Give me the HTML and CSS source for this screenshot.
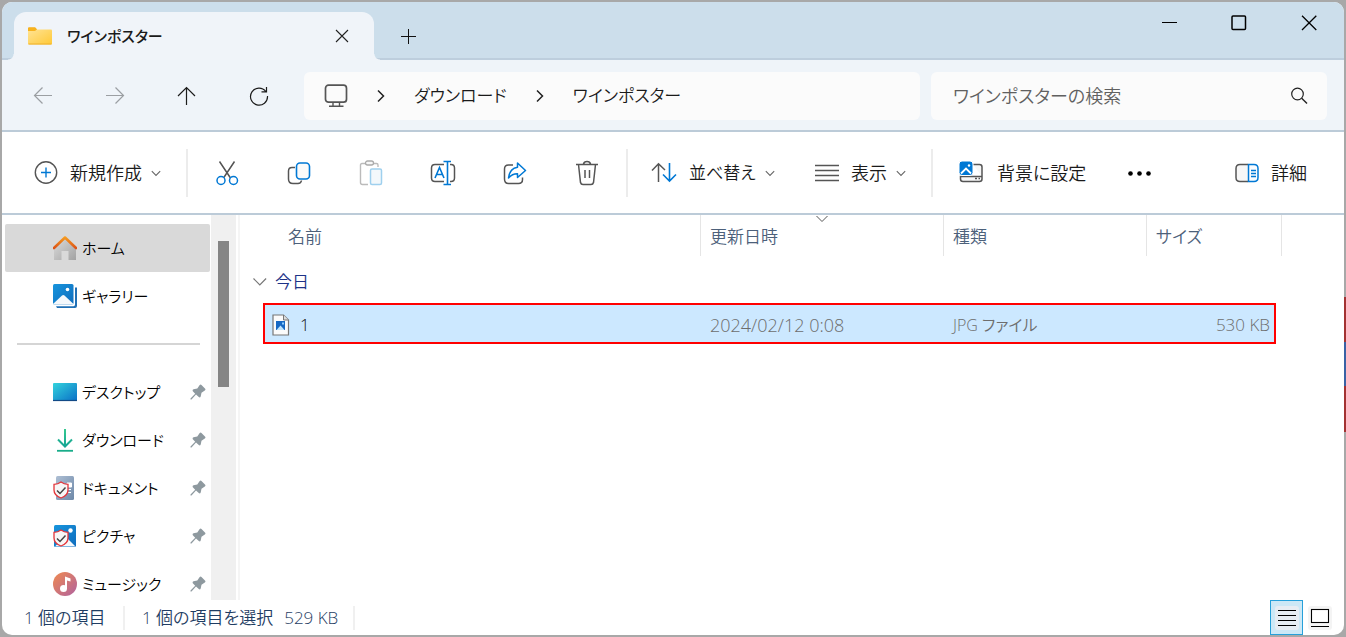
FILE: index.html
```html
<!DOCTYPE html>
<html lang="ja">
<head>
<meta charset="utf-8">
<title>ワインポスター</title>
<link rel="stylesheet" href="styles.css">
</head>
<body>
<svg class="defs" width="0" height="0" aria-hidden="true">
  <defs>
    <linearGradient id="gFolder" x1="0" y1="0" x2="1" y2="1"><stop offset="0" stop-color="#ffe394"/><stop offset="1" stop-color="#ffc937"/></linearGradient>
    <linearGradient id="gRoof" x1="0" y1="0" x2="0" y2="1"><stop offset="0" stop-color="#f59a1f"/><stop offset="1" stop-color="#dc5418"/></linearGradient>
    <linearGradient id="gWall" x1="0" y1="0" x2="1" y2="1"><stop offset="0" stop-color="#dcdcdc"/><stop offset="1" stop-color="#a2a2a2"/></linearGradient>
    <linearGradient id="gBlue" x1="0" y1="0" x2="1" y2="1"><stop offset="0" stop-color="#1795dd"/><stop offset="1" stop-color="#0f6cbd"/></linearGradient>
    <linearGradient id="gDesk" x1="0" y1="0" x2="1" y2="1"><stop offset="0" stop-color="#33d3dd"/><stop offset="1" stop-color="#0a6fc6"/></linearGradient>
    <linearGradient id="gDown" x1="0" y1="0" x2="0" y2="1"><stop offset="0" stop-color="#36c98f"/><stop offset="1" stop-color="#14a594"/></linearGradient>
    <linearGradient id="gDoc" x1="0" y1="0" x2="1" y2="1"><stop offset="0" stop-color="#aebfd4"/><stop offset="1" stop-color="#6d88a8"/></linearGradient>
    <linearGradient id="gMusic" x1="0" y1="0" x2="1" y2="1"><stop offset="0" stop-color="#f08a50"/><stop offset="1" stop-color="#b0629f"/></linearGradient>
    <symbol id="chev" viewBox="0 0 10 10"><path d="M1.500 3.500l3.500 3.500 3.500-3.500" fill="none" stroke="#666" stroke-width=".9"/></symbol>
    <symbol id="crumb" viewBox="0 0 10 14"><path d="M2 1.500l5.500 5.500L2 12.500" fill="none" stroke="#222" stroke-width="1.500"/></symbol>
    <symbol id="pin" viewBox="0 0 16 16"><path d="M9.500 1.200Q10.500 0 11.500 1L15.200 4.700Q16 5.700 14.800 6.500L11.500 8.800 10.700 12.500Q10 14.200 8.800 13L6 10.400 1.500 15.500H.5V14.500L5.200 9.700 2.800 7.200Q2 6 3.500 5.300L7.300 4.600Z" fill="#8e999f"/></symbol>
    <symbol id="shield" viewBox="0 0 16 18"><path d="M8 1Q11 3.300 15 3.300V9Q15 14.500 8 17 1 14.500 1 9V3.300Q5 3.300 8 1Z" fill="#f7f7f7" stroke="#e3343a" stroke-width="1.300"/><path d="M4 9.500l3 3 5.500-6" fill="none" stroke="#444" stroke-width="1.500"/></symbol>
  </defs>
</svg>
<div class="window">
  <header class="titlebar">
    <div class="tab">
      <svg width="24" height="18" viewBox="0 0 24 18"><path d="M0 1.500Q0 .5 1 .5H7L9 3H0Z" fill="#f2a514"/><path d="M0 2.500H23Q24 2.500 24 3.500V16.500Q24 17.500 23 17.500H1Q0 17.500 0 16.500Z" fill="url(#gFolder)"/><path d="M0 1.500Q0 .5 1 .5H7Q8.500 .5 8.500 2.200 8 4 6.500 4H0Z" fill="#f7b21d"/><path d="M.5 17H23.500" stroke="#eeb02d"/></svg>
      <span class="tab-title">ワインポスター</span>
      <button class="tab-close" aria-label="タブを閉じる"><svg width="14" height="14" viewBox="0 0 14 14"><path d="M1 1l12 12M13 1L1 13" stroke="#222" stroke-width="1.100"/></svg></button>
    </div>
    <button class="new-tab" aria-label="新しいタブ"><svg width="16" height="16" viewBox="0 0 16 16"><path d="M1 8.500H16M8.500 1V16" stroke="#111"/></svg></button>
    <div class="caption">
      <button aria-label="最小化"><svg width="16" height="16" viewBox="0 0 16 16"><path d="M1 7.500H16" stroke="#000"/></svg></button>
      <button aria-label="最大化"><svg width="16" height="16" viewBox="0 0 16 16"><rect x="1" y="1" width="13.500" height="13.500" rx="1" fill="none" stroke="#000" stroke-width="1.500"/></svg></button>
      <button aria-label="閉じる"><svg width="16" height="16" viewBox="0 0 16 16"><path d="M1 .7l14.300 14.300M15.300 .7L1 15" stroke="#000" stroke-width="1.300"/></svg></button>
    </div>
  </header>

  <div class="navbar">
    <div class="nav-buttons">
      <button aria-label="戻る" disabled><svg width="20" height="20" viewBox="0 0 20 20"><path d="M1 9.500H19M9.500 1.500L1.500 9.500l8 8" fill="none" stroke="#9b9fa3" stroke-width="1.200"/></svg></button>
      <button aria-label="進む" disabled><svg width="20" height="20" viewBox="0 0 20 20"><path d="M1 9.500H19M10.500 1.500l8 8-8 8" fill="none" stroke="#9b9fa3" stroke-width="1.200"/></svg></button>
      <button aria-label="上へ"><svg width="20" height="20" viewBox="0 0 20 20"><path d="M9.500 1.500V19M1 10l8.500-8.500L18 10" fill="none" stroke="#1c1c1c" stroke-width="1.200"/></svg></button>
      <button aria-label="最新の情報に更新"><svg width="20" height="20" viewBox="0 0 20 20"><path d="M16.800 5.500A8.500 8.500 0 1 0 18.500 10M17.500 1V5.800H12.500" fill="none" stroke="#1c1c1c" stroke-width="1.200"/></svg></button>
    </div>
    <nav class="address" aria-label="アドレス">
      <svg class="pc" width="24" height="24" viewBox="0 0 24 24"><rect x="1.500" y="1.200" width="21" height="17" rx="3" fill="none" stroke="#555" stroke-width="1.700"/><path d="M9 18.500V22M15.500 18.500V22M5 22.200H19.500" stroke="#555" stroke-width="1.400" fill="none"/></svg>
      <svg class="crumb" width="10" height="14"><use href="#crumb"/></svg>
      <a href="#downloads">ダウンロード</a>
      <svg class="crumb" width="10" height="14"><use href="#crumb"/></svg>
      <a href="#folder">ワインポスター</a>
    </nav>
    <label class="search">
      <input type="search" placeholder="ワインポスターの検索" aria-label="ワインポスターの検索">
      <svg width="18" height="18" viewBox="0 0 18 18"><circle cx="7.500" cy="7" r="5.800" fill="none" stroke="#222" stroke-width="1.200"/><path d="M11.700 11.200L17 16.500" stroke="#222" stroke-width="1.400"/></svg>
    </label>
  </div>

  <div class="toolbar">
    <button class="cmd cmd-new"><svg width="24" height="24" viewBox="0 0 24 24"><circle cx="12" cy="11.500" r="10.700" fill="none" stroke="#555" stroke-width="1.400"/><path d="M7 11.500H17M12 6.500V16.500" stroke="#0078d4" stroke-width="1.400"/></svg><span>新規作成</span><svg class="chev" width="12" height="12"><use href="#chev"/></svg></button>
    <span class="sep"></span>
    <button class="tool" aria-label="切り取り"><svg width="24" height="26" viewBox="0 0 24 26"><path d="M4.500 1.500L15.500 18M19.500 1.500L8.500 18" stroke="#555" stroke-width="1.500"/><circle cx="6" cy="20.500" r="4" fill="#fff" stroke="#0078d4" stroke-width="1.500"/><circle cx="18.500" cy="20.500" r="4" fill="#fff" stroke="#0078d4" stroke-width="1.500"/></svg></button>
    <button class="tool" aria-label="コピー"><svg width="24" height="24" viewBox="0 0 24 24"><path d="M8 6.500H5Q1.500 6.500 1.500 10V18Q1.500 22.500 6 22.500H11Q14 22.500 14.500 19.500" fill="none" stroke="#555" stroke-width="1.500"/><rect x="9.500" y="2" width="13" height="16" rx="3.500" fill="#fafafa" stroke="#0078d4" stroke-width="1.600"/></svg></button>
    <button class="tool" aria-label="貼り付け" disabled><svg width="24" height="26" viewBox="0 0 24 26"><path d="M6 3.500H3Q1.500 3.500 1.500 5V22.500Q1.500 24.500 3.500 24.500H9M14.500 3.500H17.500Q19 3.500 19 5V7" fill="none" stroke="#bbb" stroke-width="1.400"/><rect x="6.500" y="1" width="8" height="4" rx="2" fill="#f7f7f7" stroke="#aaa" stroke-width="1.300"/><rect x="11.500" y="9" width="11" height="15.500" rx="1.500" fill="#f3f8fb" stroke="#9fd0ee" stroke-width="1.500"/></svg></button>
    <button class="tool" aria-label="名前の変更"><svg width="26" height="26" viewBox="0 0 26 26"><path d="M14 4.500H5Q1.500 4.500 1.500 8V18Q1.500 21.500 5 21.500H14M20 4.500H21Q24.500 4.500 24.500 8V18Q24.500 21.500 21 21.500H20" fill="none" stroke="#555" stroke-width="1.500"/><path d="M5 18L9.500 7.500 14 18M6.500 14.500H12.500M17.500 2V24M13.500 1.500H21M13.500 24.500H21" fill="none" stroke="#0078d4" stroke-width="1.600"/></svg></button>
    <button class="tool" aria-label="共有"><svg width="24" height="24" viewBox="0 0 24 24"><path d="M10 4H5.500Q1.500 4 1.500 8V18Q1.500 22.500 5.500 22.500H15.500Q19.500 22.500 19.500 18.500V16.500" fill="none" stroke="#555" stroke-width="1.500"/><path d="M14.500 2L22.500 9.500 14.500 16.500V12.700Q9.500 12.500 5.500 17 6.500 7.500 14.500 6.200Z" fill="#fff" stroke="#0078d4" stroke-width="1.500" stroke-linejoin="round"/></svg></button>
    <button class="tool" aria-label="削除"><svg width="24" height="26" viewBox="0 0 24 26"><path d="M1 4.500H23M8.500 4Q9 1.500 12 1.500T15.500 4M3.500 4.500L5.500 22.500Q6 24.500 8 24.500H16Q18 24.500 18.500 22.500L20.500 4.500M10 10V18M14.500 10V18" fill="none" stroke="#555" stroke-width="1.500"/></svg></button>
    <span class="sep"></span>
    <button class="cmd cmd-sort"><svg width="26" height="22" viewBox="0 0 26 22"><path d="M7.500 2V20M1 8.500L7.500 1.700 14 8" fill="none" stroke="#555" stroke-width="1.500"/><path d="M18.500 1V19M12 12.500L18.500 19 25 12.500" fill="none" stroke="#0078d4" stroke-width="1.600"/></svg><span>並べ替え</span><svg class="chev" width="12" height="12"><use href="#chev"/></svg></button>
    <button class="cmd cmd-view"><svg width="24" height="18" viewBox="0 0 24 18"><path d="M0 1.500H24M0 6.500H24M0 11.500H24M0 16.500H24" stroke="#555" stroke-width="1.300"/></svg><span>表示</span><svg class="chev" width="12" height="12"><use href="#chev"/></svg></button>
    <span class="sep"></span>
    <button class="cmd cmd-wall"><svg width="26" height="24" viewBox="0 0 26 24"><path d="M14 3.500H20.500Q23 3.500 23 6V18Q23 20.500 20.500 20.500H4Q1.500 20.500 1.500 18V15.500H23" fill="#f7f7f7" stroke="#555" stroke-width="1.500"/><path d="M16 17.500H18M19.500 17.500H21" stroke="#555" stroke-width="1.300"/><rect x="0" y="0" width="14" height="14.500" rx="3" fill="#0078d4" stroke="#fff" stroke-width="1"/><path d="M2 12.500L7 7.500 12 12.500" fill="none" stroke="#fff" stroke-width="1.800"/><circle cx="10" cy="4.500" r="1.200" fill="#fff"/></svg><span>背景に設定</span></button>
    <button class="more" aria-label="その他"><svg width="26" height="6" viewBox="0 0 26 6"><circle cx="3.500" cy="3.500" r="2.300"/><circle cx="12.500" cy="3.500" r="2.300"/><circle cx="21.500" cy="3.500" r="2.300"/></svg></button>
    <button class="cmd cmd-details"><svg width="24" height="20" viewBox="0 0 24 20"><path d="M13 1.500H5Q1 1.500 1 5.500V14.500Q1 18.500 5 18.500H13" fill="#f7f7f7" stroke="#555" stroke-width="1.500"/><path d="M13.500 1.500H19Q23 1.500 23 5.500V14.500Q23 18.500 19 18.500H13.500Z" fill="#fafcff" stroke="#0078d4" stroke-width="1.500"/><path d="M16 7.500H21M16 10.500H21M16 13.500H21" stroke="#0078d4" stroke-width="1.300"/></svg><span>詳細</span></button>
  </div>

  <div class="content">
    <nav class="sidebar" aria-label="ナビゲーション">
      <a class="item selected" href="#home"><svg width="24" height="24" viewBox="0 0 24 24"><path d="M1 11L12 2l11 9V24H15.500V15H8.500V24H1Z" fill="url(#gWall)"/><path d="M1 12L12 1.500 23 12" fill="none" stroke="url(#gRoof)" stroke-width="2.600" stroke-linecap="round" stroke-linejoin="round"/></svg><span>ホーム</span></a>
      <a class="item" href="#gallery"><svg width="24" height="24" viewBox="0 0 24 24"><path d="M22 3.500H24V22Q24 24 22 24H4L3 22.300H20.500Q22 22.300 22 20.500Z" fill="#1f6fb5"/><rect width="20.500" height="20.500" rx="1.500" fill="url(#gBlue)"/><path d="M0 20L9 11.500Q10.300 10.500 11.500 11.500L20.500 20Q20 20.500 19 20.500H1.500Q.5 20.500 0 20Z" fill="#f4f8fc"/><circle cx="14.500" cy="5.500" r="1.800" fill="#fff"/></svg><span>ギャラリー</span></a>
      <hr>
      <a class="item" href="#desktop"><svg width="24" height="24" viewBox="0 0 24 24"><rect y="3" width="24" height="18" rx="1" fill="url(#gDesk)"/><path d="M0 20.500H24" stroke="#124a86" stroke-width="1.200"/></svg><span>デスクトップ</span><svg class="pin" width="16" height="16"><use href="#pin"/></svg></a>
      <a class="item" href="#downloads"><svg width="24" height="24" viewBox="0 0 24 24"><path d="M12.010 1L12 18M5 11.500L12 18.500 19 11.500" fill="none" stroke="url(#gDown)" stroke-width="2"/><path d="M4 22.800H20" stroke="#19ad8a" stroke-width="1.800"/></svg><span>ダウンロード</span><svg class="pin" width="16" height="16"><use href="#pin"/></svg></a>
      <a class="item" href="#documents"><svg width="24" height="24" viewBox="0 0 24 24"><rect x="3" width="18" height="24" rx="1.500" fill="url(#gDoc)"/><path d="M14 7H18.500V11H14ZM15 13.500H18M15 16.500H18" fill="#fff" stroke="#fff" stroke-width="1"/><use href="#shield" x="0" y="5" width="16" height="18"/></svg><span>ドキュメント</span><svg class="pin" width="16" height="16"><use href="#pin"/></svg></a>
      <a class="item" href="#pictures"><svg width="24" height="24" viewBox="0 0 24 24"><rect x="1" y="1" width="22" height="22" rx="1.500" fill="url(#gBlue)"/><path d="M2 22.500L12 12 22.500 22.500Z" fill="#f4f8fc"/><circle cx="17.500" cy="6.500" r="2.200" fill="#fff"/><use href="#shield" x="0" y="5" width="16" height="18"/></svg><span>ピクチャ</span><svg class="pin" width="16" height="16"><use href="#pin"/></svg></a>
      <a class="item" href="#music"><svg width="24" height="24" viewBox="0 0 24 24"><circle cx="12" cy="12" r="12" fill="url(#gMusic)"/><path d="M12 17V4.500L17.500 6.500V9.500L14 8.500V17" fill="#fff"/><circle cx="10.500" cy="16.500" r="3.500" fill="#fff"/></svg><span>ミュージック</span><svg class="pin" width="16" height="16"><use href="#pin"/></svg></a>
    </nav>
    <div class="scrollbar"><div class="thumb"></div></div>
    <main class="files">
      <table>
        <colgroup><col class="c-gutter"><col><col class="c-date"><col class="c-type"><col class="c-size"><col class="c-end"></colgroup>
        <thead>
          <tr><td></td><th class="name" scope="col">名前</th><th scope="col">更新日時<svg class="sort-mark" width="12" height="8" viewBox="0 0 12 8"><path d="M.5 1l5.500 5.500L11.500 1" fill="none" stroke="#555"/></svg></th><th scope="col">種類</th><th class="size" colspan="2" scope="col">サイズ</th></tr>
        </thead>
        <tbody>
          <tr class="group"><th colspan="6" scope="rowgroup"><button aria-expanded="true"><svg width="14" height="10" viewBox="0 0 14 10"><path d="M.5 1.500l6.300 6.300L13.100 1.500" fill="none" stroke="#777" stroke-width="1.200"/></svg>今日</button></th></tr>
          <tr class="row"><td class="gutter"></td><td class="file"><div><svg width="18" height="22" viewBox="0 0 18 22"><path d="M1 1H11.500L16.500 6V21H1Z" fill="#fbfbfb" stroke="#777" stroke-width="1.200"/><path d="M11.500 1V6H16.500" fill="#ddd" stroke="#777"/><rect x="4" y="7" width="9" height="9" fill="#1668c4"/><path d="M4.500 16L8.500 11.500 12.500 16Z" fill="#bfe3fb"/><path d="M10 8.500H12V10.500H10Z" fill="#8fd0ff"/></svg>1</div></td><td class="date">2024/02/12 0:08</td><td class="type">JPG ファイル</td><td class="amount">530 KB</td><td class="gutter"></td></tr>
        </tbody>
      </table>
    </main>
  </div>

  <footer class="status">
    <span class="count">1 個の項目</span>
    <span class="picked">1 個の項目を選択</span>
    <span class="bytes">529 KB</span>
    <div class="views">
      <button class="view active" aria-label="詳細表示"><svg width="24" height="24" viewBox="0 0 24 24"><rect width="24" height="24" rx="3" fill="#e7edf3"/><path d="M3 4.500H21M3 9.500H21M3 14.500H21M3 19.500H21" stroke="#000"/></svg></button>
      <button class="view" aria-label="大アイコン表示"><svg width="24" height="24" viewBox="0 0 24 24"><rect width="24" height="24" rx="3" fill="#f4f4f4"/><rect x="3.500" y="3.500" width="17" height="13" fill="#fff" stroke="#000" stroke-width="1.100"/><path d="M3 20.500H21" stroke="#000"/></svg></button>
    </div>
  </footer>
</div>
</body>
</html>
```
FILE: styles.css
```css
* { box-sizing: border-box; }

body {
  margin: 0;
  height: 100vh;
  padding: 2px;
  overflow: hidden;
  background:
    linear-gradient(#a8a8a8 0 297px, #a33232 297px 342px, #3a62a5 342px 386px, #a33232 386px 432px, #a8a8a8 432px) right / 2px 100% no-repeat,
    #a8a8a8;
  color: #1a1a1a;
  font-family: "Open Sans", "Noto Sans CJK JP", sans-serif;
  font-size: 17px;
  font-weight: 350;
  line-height: 24px;
  font-feature-settings: "palt";
}

.defs { position: absolute; }
svg { display: block; flex: none; }

button, input {
  font: inherit;
  font-feature-settings: inherit;
  color: inherit;
  background: none;
  border: 0;
  padding: 0;
  margin: 0;
}
button { display: flex; align-items: center; justify-content: center; }
a { color: inherit; text-decoration: none; }
span, a { white-space: nowrap; }

.window {
  display: flex;
  flex-direction: column;
  height: 100%;
  overflow: hidden;
  background: #fff;
  border-radius: 10px;
}

/* Title bar */
.titlebar {
  display: flex;
  height: 58px;
  flex: none;
  padding-left: 12px;
  background: #ccdeeb;
  box-shadow: inset 0 -2px #bdcedd;
}
.tab {
  position: relative;
  display: flex;
  align-items: center;
  width: 360px;
  margin-top: 10px;
  padding: 0 22px 0 14px;
  background: #f0f4f9;
  border-radius: 12px 12px 0 0;
}
.tab::before, .tab::after {
  content: "";
  position: absolute;
  bottom: 0;
  width: 6px;
  height: 6px;
}
.tab::before { right: 100%; background: radial-gradient(circle at 0 0, transparent 5px, #f0f4f9 6px); }
.tab::after { left: 100%; background: radial-gradient(circle at 100% 0, transparent 5px, #f0f4f9 6px); }
.tab-title {
  flex: 1;
  margin-left: 15px;
  font-size: 15px;
  font-weight: 500;
}
.tab-close { width: 20px; height: 20px; }
.new-tab { width: 68px; margin-top: 10px; }
.caption { display: flex; margin-left: auto; height: 41px; }
.caption button { width: 70px; }

/* Navigation row */
.navbar {
  display: flex;
  align-items: center;
  flex: none;
  height: 72px;
  padding: 2px 17px 0 5px;
  background: #eff4f9;
  border-bottom: 2px solid #bccbd8;
}
.nav-buttons { display: flex; margin-right: 9px; }
.nav-buttons button { width: 72px; height: 48px; }
.address, .search {
  display: flex;
  align-items: center;
  height: 48px;
  background: #fbfbfb;
  border-radius: 6px;
}
.address { flex: 1; min-width: 0; padding-left: 20px; }
.address .crumb { margin: 0 28px; }
.search { width: 30%; margin-left: 11px; padding: 0 19px 0 22px; font-size: 18px; }
.search input { flex: 1; min-width: 0; outline: 0; }
.search input::placeholder { color: #606060; opacity: 1; }

/* Command bar */
.toolbar {
  display: flex;
  align-items: center;
  flex: none;
  height: 83px;
  border-bottom: 2px solid #bccbd8;
}
.sep { width: 2px; height: 48px; background: #ececec; }
.cmd { height: 48px; gap: 12px; justify-content: flex-start; }
.cmd span { font-size: 18px; }
.chev { margin-left: -4px; }
.cmd-new { width: 184px; padding-left: 32px; }
.tool { width: 72px; height: 48px; }
.tool:nth-of-type(2) { margin-left: 3px; }
.tool + .sep { margin-left: 3px; }
.cmd-sort { width: 164px; padding-left: 23px; }
.cmd-sort span { font-size: 17px; }
.cmd-view { width: 139px; padding-left: 23px; }
.cmd-wall { width: 168px; padding-left: 26px; }
.more { width: 78px; height: 48px; }
.cmd-details { margin-left: auto; padding-right: 37px; }

/* Body */
.content { display: flex; flex: 1; min-height: 0; }
.sidebar {
  width: 209px;
  flex: none;
  padding: 9px 1px 0 3px;
  overflow: hidden;
  font-size: 15px;
}
.item {
  display: flex;
  align-items: center;
  gap: 5px;
  height: 48px;
  padding: 0 4px 0 48px;
  color: #000;
}
.item .pin { margin-left: auto; }
.selected { background: #d9d9d9; border-radius: 2px; }
hr {
  height: 2px;
  margin: 23px 10px 23px 12px;
  border: 0;
  background: #d5d5d5;
}
.scrollbar {
  width: 25px;
  flex: none;
  padding: 26px 7px 0;
  background: #f0f0f0;
}
.thumb { height: 146px; background: #858585; }
.files {
  flex: 1;
  min-width: 0;
  margin-left: 2px;
  padding: 0 62px 0 13px;
  border-left: 2px solid #f5f5f5;
}

table { width: 100%; table-layout: fixed; border-spacing: 0; }
.c-gutter { width: 10px; }
.c-date { width: 243px; }
.c-type { width: 203px; }
.c-size { width: 130px; }
.c-end { width: 6px; }
th, td {
  padding: 0 9px;
  text-align: left;
  font-weight: 350;
  white-space: nowrap;
}
thead th {
  position: relative;
  height: 41px;
  padding-top: 2px;
  color: #4c607a;
  border-left: 1px solid #e5e5e5;
}
thead .name { padding-left: 25px; border-left: 0; }
thead .size { border-right: 1px solid #e5e5e5; }
.sort-mark { position: absolute; top: 0; left: calc(50% - 6px); }
.group th { height: 47px; padding: 4px 0 0; color: #1e3287; }
.group button { gap: 8px; }
.row td {
  height: 41px;
  padding: 2px 9px 0 10px;
  color: #6d6d6d;
  background: #cce8ff;
  border: 2px solid #f00;
  border-width: 2px 0;
}
.row .file { padding-left: 7px; color: #111; border-left-width: 2px; }
.file div { display: flex; align-items: center; gap: 10px; }
.row .date { font-size: 18px; }
.row .type { font-size: 16px; }
.row .amount { padding-right: 4px; text-align: right; border-right-width: 2px; }
.row .gutter { padding: 0; background: none; border: 0; }

/* Status bar */
.status {
  display: flex;
  align-items: center;
  flex: none;
  height: 35px;
  padding: 0 12px 0 22px;
  color: #1f3d63;
}
.count { width: 101px; border-right: 2px solid #f0f0f0; }
.picked { margin-left: 17px; }
.bytes { margin-left: 11px; padding-right: 15px; border-right: 2px solid #f0f0f0; }
.views { display: flex; margin-left: auto; gap: 5px; }
.view { width: 24px; height: 35px; }
.view.active { width: 33px; background: #cce8f6; border: 1px solid #26a0da; }
```
